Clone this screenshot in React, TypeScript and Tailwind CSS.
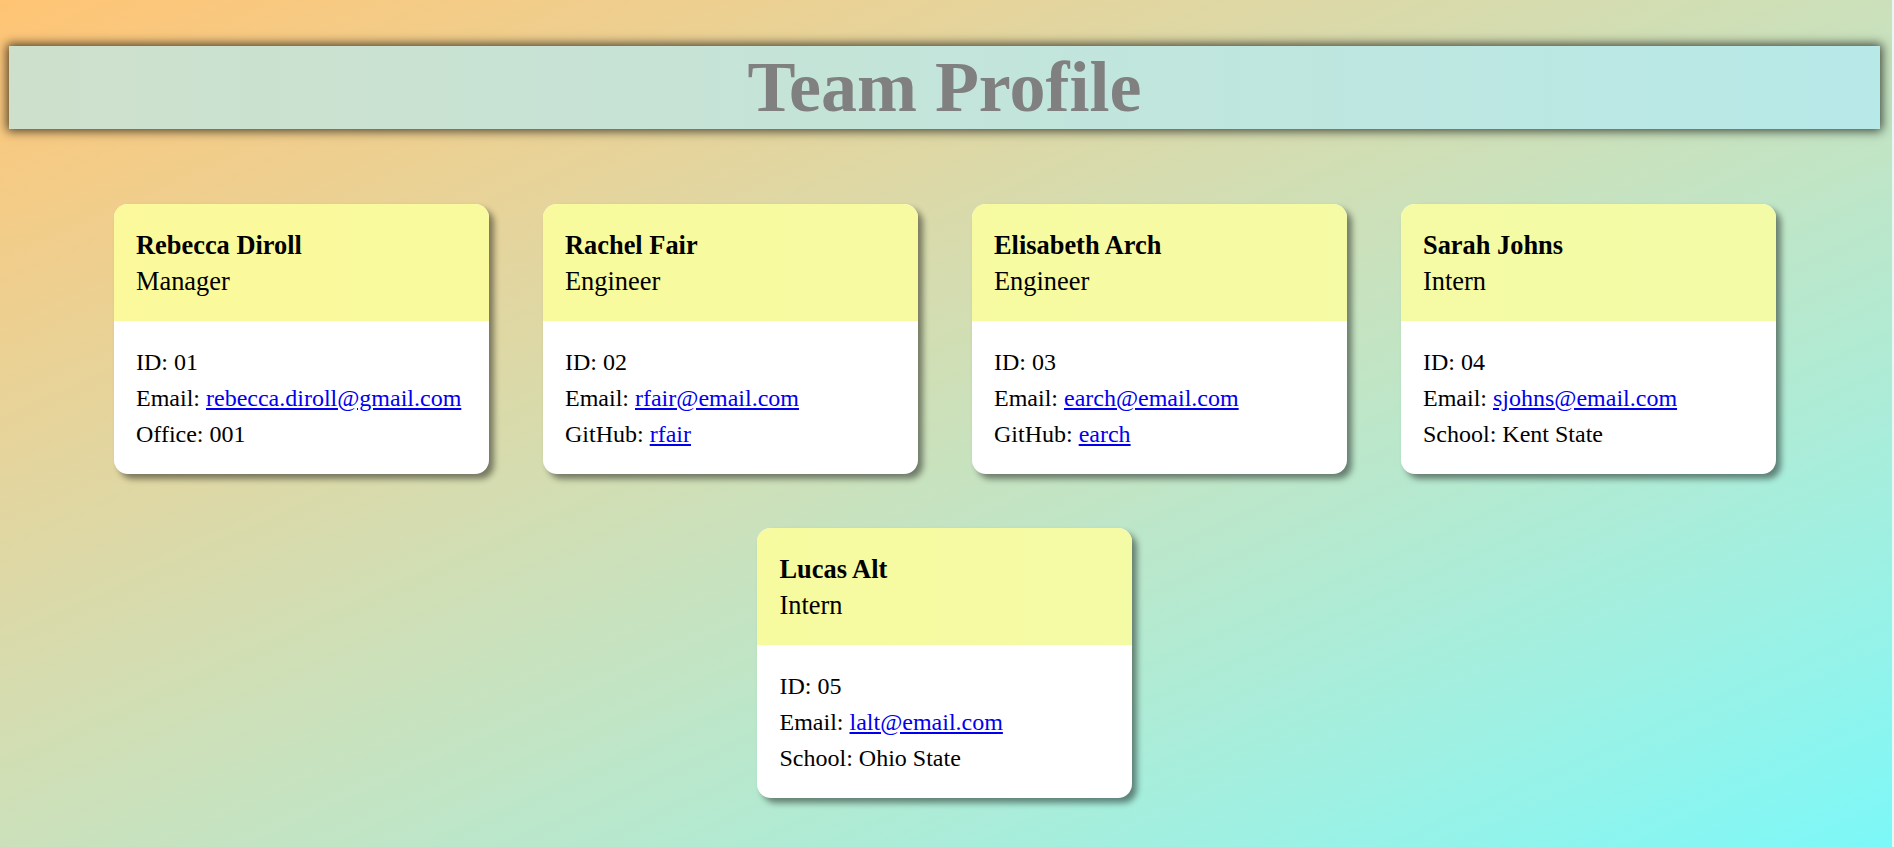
import React from "react";

type Member = {
  name: string;
  role: string;
  id: string;
  email: string;
  extraLabel: string;
  extraValue: string;
  extraLink?: boolean;
  headClass: string;
};

const members: Member[] = [
  { name: "Rebecca Diroll", role: "Manager", id: "01", email: "rebecca.diroll@gmail.com", extraLabel: "Office", extraValue: "001", headClass: "bg-linear-to-r from-[#fbf99b] to-[#f9fa9e]" },
  { name: "Rachel Fair", role: "Engineer", id: "02", email: "rfair@email.com", extraLabel: "GitHub", extraValue: "rfair", extraLink: true, headClass: "bg-linear-to-r from-[#f9fa9e] to-[#f7faa1]" },
  { name: "Elisabeth Arch", role: "Engineer", id: "03", email: "earch@email.com", extraLabel: "GitHub", extraValue: "earch", extraLink: true, headClass: "bg-linear-to-r from-[#f7faa1] to-[#f5fba4]" },
  { name: "Sarah Johns", role: "Intern", id: "04", email: "sjohns@email.com", extraLabel: "School", extraValue: "Kent State", headClass: "bg-linear-to-r from-[#f5fba4] to-[#f3fba7]" },
  { name: "Lucas Alt", role: "Intern", id: "05", email: "lalt@email.com", extraLabel: "School", extraValue: "Ohio State", headClass: "bg-linear-to-r from-[#f7fa9f] to-[#f4fba5]" },
];

function Card({ m }: { m: Member }) {
  return (
    <div className="m-[27px] w-[375px] rounded-[14px] overflow-hidden bg-white shadow-[5px_5px_6px_rgba(0,0,0,0.45)]">
      <div className={`${m.headClass} px-[22.5px] py-[22.5px] text-black`}>
        <div className="text-[26.4px] leading-[36px] font-bold">{m.name}</div>
        <div className="text-[26.4px] leading-[36px]">{m.role}</div>
      </div>
      <div className="px-[22.5px] py-[22.5px] text-[24px] leading-[36px] text-black">
        <div>ID: {m.id}</div>
        <div>
          Email: <a href="#" className="text-[#0000ee] underline">{m.email}</a>
        </div>
        <div>
          {m.extraLabel}:{" "}
          {m.extraLink ? (
            <a href="#" className="text-[#0000ee] underline">{m.extraValue}</a>
          ) : (
            m.extraValue
          )}
        </div>
      </div>
    </div>
  );
}

export default function App() {
  return (
    <div className="w-full min-h-screen bg-[#eaf6f6] font-['Liberation_Serif','Times_New_Roman',serif]">
      <div className="w-[1892px] h-[847px] bg-linear-to-br from-[#ffc474] to-[#7bf8f8] overflow-hidden">
        <div className="w-[1889px] pt-[46px]">
          <div className="mx-[9px] h-[83px] bg-linear-to-r from-[#cee0cc] to-[#b7e9e8] shadow-[0_0_10px_2px_rgba(0,0,0,0.7)] text-center">
            <h1 className="text-[72px] leading-[83px] font-bold text-[#808080]">Team Profile</h1>
          </div>
          <div className="mt-[48px] flex flex-wrap justify-center">
            {members.map((m) => (
              <Card key={m.id} m={m} />
            ))}
          </div>
        </div>
      </div>
    </div>
  );
}
